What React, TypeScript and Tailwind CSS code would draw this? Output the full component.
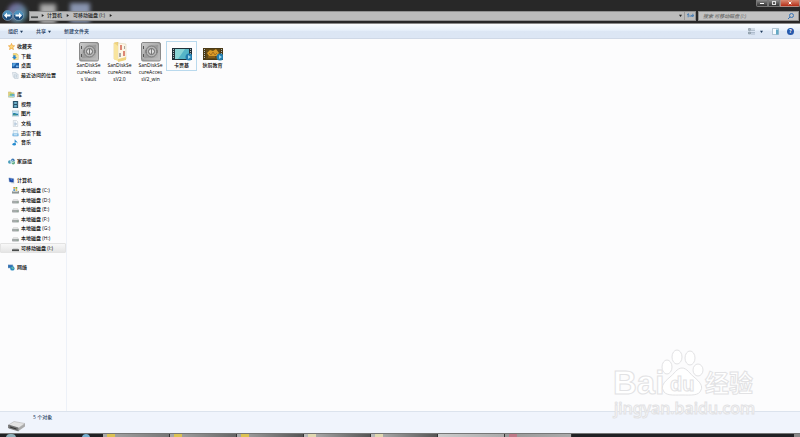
import { ReactNode } from "react";

type IconName =
  | "star" | "download" | "desktop" | "recent" | "library" | "video" | "picture"
  | "document" | "cloud" | "music" | "homegroup" | "computer" | "system"
  | "drive" | "removable" | "network";

const icons: Record<IconName, ReactNode> = {
  star: <path d="M8 1l2 5 5 .5-4 3.500 1.500 5L8 12.500 3.500 15 5 10 1 6.500 6 6z" fill="#ffd77a" stroke="#e99a2c" strokeWidth="1.500" />,
  download: (
    <>
      <path d="M3 1h7l4 3v11H3z" fill="#f2d777" stroke="#d3ad45" />
      <path d="M10 4l4 1v10H8z" fill="#f8e7a0" />
      <path d="M0 9h3V5h5v4h3l-5 6z" fill="#2b86cf" />
    </>
  ),
  desktop: (
    <>
      <path d="M0 2h16v12H0z" fill="#1d5ea8" />
      <path d="M1 3h9L4 10H1z" fill="#5da6df" />
      <path d="M9 8h6v4H9z" fill="#7fb6e4" />
      <path d="M0 13h16v1H0z" fill="#153c70" />
    </>
  ),
  recent: (
    <>
      <path d="M1 1h8l2 3v8H3z" fill="#e8eef4" stroke="#aab8c4" />
      <path d="M6 5h8v10H6z" fill="#f4f7fa" stroke="#9fb0c0" />
      <path d="M8 8h4M8 10h4M8 12h4" stroke="#91a7bc" />
    </>
  ),
  library: (
    <>
      <path d="M1 2h6l1 2h6v10H1z" fill="#e9d780" stroke="#c1ae5b" />
      <path d="M4 6h7v8H4z" fill="#76bd83" />
      <path d="M9 7h6v7H9z" fill="#5da9cf" />
      <path d="M1 11h14v3H1z" fill="#a7d4df" />
    </>
  ),
  video: (
    <>
      <path d="M2 0h12v16H2z" fill="#264e66" />
      <path d="M5 2h6v5H5zM5 9h6v5H5z" fill="#71b4ce" />
      <path d="M3 2v12M13 2v12" stroke="#bdd4dd" strokeDasharray="1 2" />
    </>
  ),
  picture: (
    <>
      <path d="M0 2h16v12H0z" fill="#c8e6f4" stroke="#8ea7b5" />
      <path d="M2 8c4-3 7 2 12 0v4H2z" fill="#267fae" />
      <path d="M2 11l5-2 4 3H2z" fill="#4f9a72" />
    </>
  ),
  document: (
    <>
      <path d="M3 1h7l3 3v11H3z" fill="#fafcfe" stroke="#a9b5bf" />
      <path d="M5 5h4M5 8h6M5 10h6M5 12h4" stroke="#7698bb" />
    </>
  ),
  cloud: (
    <>
      <path d="M3 1h10v13H3z" fill="#deedf8" stroke="#9abbd2" />
      <path d="M1 8h14v6H1z" fill="#79b7e2" />
      <path d="M4 5h8M4 11h8" stroke="#f2fbff" strokeWidth="2" />
    </>
  ),
  music: (
    <>
      <path d="M7 1c1 4 7 4 5 10 0-3-2-4-4-4v6H6V1z" fill="#328dcb" />
      <ellipse cx="5" cy="12" rx="4" ry="3" fill="#248bd0" />
    </>
  ),
  homegroup: (
    <>
      <circle cx="4" cy="9" r="4" fill="#4b9dbb" />
      <circle cx="11" cy="5" r="4" fill="#3975b3" />
      <circle cx="12" cy="11" r="4" fill="#56a87e" />
      <path d="M5 9l6-4 1 6z" fill="none" stroke="#dff1f5" strokeWidth="1.500" />
    </>
  ),
  computer: (
    <>
      <path d="M2 2l11 2v9L3 11z" fill="#1742a5" stroke="#6f94bd" />
      <path d="M4 4l6 1v4z" fill="#4b82d7" />
      <path d="M7 14h8l-3-3z" fill="#a5b5c2" />
    </>
  ),
  system: (
    <>
      <path d="M3 0h4v4H3z" fill="#d89a43" />
      <path d="M8 0h4v4H8z" fill="#6bad51" />
      <path d="M3 5h4v4H3z" fill="#438fce" />
      <path d="M8 5h4v4H8z" fill="#e2bb3c" />
      <path d="M0 9h16v6H0z" fill="#8c9494" />
      <path d="M1 10h13" stroke="#d6dcdc" strokeWidth="2" />
    </>
  ),
  drive: (
    <>
      <path d="M3 6h10l2 4H1z" fill="#eceeee" stroke="#b7bbbb" />
      <path d="M1 10h14v4H1z" fill="#aeb3b3" stroke="#777c7c" />
      <path d="M11 12h2" stroke="#4ba957" />
    </>
  ),
  removable: (
    <>
      <path d="M2 8h12l1 2H1z" fill="#b8bbbb" />
      <path d="M0 10h16v4H0z" fill="#484b4b" />
    </>
  ),
  network: (
    <>
      <path d="M0 2h11v7H0z" fill="#2f70b6" stroke="#7898b8" />
      <circle cx="10" cy="10" r="5" fill="#2689bd" />
      <path d="M7 8l4-2 3 4-4 2z" fill="#68b6a5" />
    </>
  ),
};

function Icon({ name }: { name: IconName }) {
  return <svg viewBox="0 0 16 16" className="size-[7px] shrink-0">{icons[name]}</svg>;
}

type NavItem = { label: string; icon: IconName; root?: boolean; active?: boolean } | null;

// null leaves an empty row between groups
const nav: NavItem[] = [
  { label: "收藏夹", icon: "star", root: true },
  { label: "下载", icon: "download" },
  { label: "桌面", icon: "desktop" },
  { label: "最近访问的位置", icon: "recent" },
  null,
  { label: "库", icon: "library", root: true },
  { label: "视频", icon: "video" },
  { label: "图片", icon: "picture" },
  { label: "文档", icon: "document" },
  { label: "迅雷下载", icon: "cloud" },
  { label: "音乐", icon: "music" },
  null,
  { label: "家庭组", icon: "homegroup", root: true },
  null,
  { label: "计算机", icon: "computer", root: true },
  { label: "本地磁盘 (C:)", icon: "system" },
  { label: "本地磁盘 (D:)", icon: "drive" },
  { label: "本地磁盘 (E:)", icon: "drive" },
  { label: "本地磁盘 (F:)", icon: "drive" },
  { label: "本地磁盘 (G:)", icon: "drive" },
  { label: "本地磁盘 (H:)", icon: "drive" },
  { label: "可移动磁盘 (I:)", icon: "removable", active: true },
  null,
  { label: "网络", icon: "network", root: true },
];

function Sidebar() {
  return (
    <nav className="w-[67px] shrink-0 border-r border-[#edf1f8] pt-[3px]">
      <ul className="grid h-[230px] auto-rows-fr">
        {nav.map((item, i) => (
          <li key={i} className="min-h-0">
            {item && (
              <a
                href="#"
                className={`flex h-full items-center gap-[2px] whitespace-nowrap ${item.root ? "pl-2" : item.active ? "pl-[11px]" : "pl-3"} ${
                  item.active ? "rounded-[1px] border border-[#e3e3e3] bg-linear-to-b from-[#f8f8f8] to-[#e5e5e5]" : ""
                }`}
              >
                <Icon name={item.icon} />
                {item.label}
              </a>
            )}
          </li>
        ))}
      </ul>
    </nav>
  );
}

function SafeIcon() {
  return (
    <svg viewBox="0 0 20 20" className="size-5">
      <defs>
        <linearGradient id="steel" x2="1" y2="1">
          <stop stopColor="#d7d7d7" />
          <stop offset=".5" stopColor="#999" />
          <stop offset="1" stopColor="#c2c2c2" />
        </linearGradient>
      </defs>
      <rect x=".5" y=".5" width="19" height="18.500" rx="1.500" fill="url(#steel)" stroke="#8a8a8a" />
      <rect x="2" y="2" width="16" height="15" rx="1" fill="none" stroke="#bcbcbc" />
      <path d="M2.500 4v3M2.500 12v3" stroke="#555" />
      <circle cx="10.500" cy="9.500" r="5.500" fill="#b5b5b5" stroke="#777" />
      <circle cx="10.500" cy="9.500" r="3" fill="#ddd" stroke="#666" />
      <path d="M10.500 7v5M5 8v3M16 8v3" stroke="#777" />
    </svg>
  );
}

function FolderIcon() {
  return (
    <svg viewBox="0 0 20 20" className="size-5">
      <path d="M4 1l4-1v18l-4-1z" fill="#f0d47d" stroke="#dfbd65" strokeWidth=".5" />
      <path d="M8 1l8 1v15l-8 2z" fill="#fdf6e6" stroke="#d9cda8" strokeWidth=".5" />
      <path d="M10 3h2v5h-2zM13 9h2v5h-2z" fill="#dc8674" />
      <path d="M9 11h2v4H9zM14 4h1v3h-1z" fill="#a9a6a2" />
      <path d="M4 1l4 3v15l-4-2z" fill="#f8e49e" />
      <path d="M8 17l8-2v3l-8 2z" fill="#efd37d" />
    </svg>
  );
}

function FilmIcon({ gold }: { gold?: boolean }) {
  return (
    <svg viewBox="0 0 20 20" className="size-5">
      <path d="M0 6h20v12H0z" fill={gold ? "#4b3a16" : "#203038"} />
      <path d="M3 7h14v10H3z" fill={gold ? "#614916" : "#55b5c7"} />
      {gold ? (
        <>
          <path d="M4 11l3-3 3 1 3-2 3 4-2 3H6z" fill="#d99a27" />
          <path d="M6 11l2 2 2-3 2 3 2-2M5 15h7" fill="none" stroke="#a8701c" />
        </>
      ) : (
        <path d="M3 7h10L6 17H3z" fill="#89d4d5" />
      )}
      <path d="M1.500 7v10M18.500 7v10" stroke="#b4bcbf" strokeWidth="1" strokeDasharray="1 1" />
      <circle cx="17" cy="15" r="3.500" fill="#237eaf" />
      <path d="M16 13v4l3-2z" fill="#9bd6ed" />
    </svg>
  );
}

const files = [
  { lines: ["SanDiskSe", "cureAcces", "s Vault"], icon: <SafeIcon /> },
  { lines: ["SanDiskSe", "cureAcces", "sV2.0"], icon: <FolderIcon /> },
  { lines: ["SanDiskSe", "cureAcces", "sV2_win"], icon: <SafeIcon /> },
  { lines: ["卡贾基"], icon: <FilmIcon />, focused: true },
  { lines: ["狄前教育"], icon: <FilmIcon gold /> },
];

function NavArrow({ back }: { back?: boolean }) {
  return (
    <button aria-label={back ? "后退" : "前进"} className="size-[11px]">
      <svg viewBox="0 0 22 22" className="size-full">
        <circle cx="11" cy="11" r="10" fill="#1b4c7c" stroke="#a7bdcc" />
        <path d="M2 10a9 9 0 0118 0c-5 2-12 2-18 0z" fill="#4f91bd" />
        <path d={back ? "M4 11l6-6v4h7v4h-7v4z" : "M18 11l-6-6v4H5v4h7v4z"} fill="#f5fbff" />
      </svg>
    </button>
  );
}

function TitleBar() {
  return (
    <header className="relative flex h-6 shrink-0 flex-col overflow-hidden border-b border-[#888] bg-[#282828]">
      {/* desktop icons showing through the glass */}
      <div className="absolute top-[3px] left-[7px] h-5 w-5 rounded-full bg-linear-to-br from-[#79639b] to-[#44969b] blur-[2px]" />
      <div className="absolute top-[4px] left-10 h-5 w-4 bg-[#aaa] blur-[2px]" />
      <div className="absolute top-[3px] left-[70px] h-5 w-5 bg-[#8995b0] blur-[2px]" />
      <div className="relative flex h-[10px] items-start justify-end">
        <button aria-label="最小化" className="flex h-[7px] w-3 items-center justify-center rounded-bl-xs border border-t-0 border-[#777] bg-linear-to-b from-[#8d8d8d] to-[#333]">
          <span className="h-px w-1 bg-white" />
        </button>
        <button aria-label="还原" className="flex h-[7px] w-3 items-center justify-center border border-t-0 border-[#777] bg-linear-to-b from-[#8d8d8d] to-[#333]">
          <span className="size-1 border border-[#ddd]" />
        </button>
        <button aria-label="关闭" className="flex h-[7px] w-5 items-center justify-center rounded-br-xs border border-t-0 border-[#b08b82] bg-linear-to-b from-[#d78972] to-[#b42a12]">
          <svg viewBox="0 0 6 6" className="size-1"><path d="M1 1l4 4M5 1L1 5" stroke="#fff" strokeWidth="1.500" /></svg>
        </button>
      </div>
      <div className="relative flex h-[11px] items-center pr-px pl-[2px]">
        <NavArrow back />
        <NavArrow />
        <div className="ml-[5px] flex h-[10px] flex-1 items-center border border-[#909090] bg-[#c3c3c3]/95 pl-[1px] text-[#222]">
          <Icon name="removable" />
          <Caret side className="ml-[3px]" />
          <button className="ml-[3px]">计算机</button>
          <Caret side className="ml-[4px]" />
          <button className="ml-[4px]">可移动磁盘 (I:)</button>
          <Caret side className="ml-[4px]" />
          <button aria-label="历史位置" className="mr-[2px] ml-auto flex"><Caret /></button>
          <button aria-label="刷新" className="flex h-full w-[11px] items-center justify-center border-l border-[#999]">
            <svg viewBox="0 0 12 12" className="size-[7px]" fill="none" stroke="#3977b5" strokeWidth="1.500">
              <path d="M2 9V3M0 5l2-2 2 2M4 7h6V3M7 5l3 3 2-3" />
            </svg>
          </button>
        </div>
        <label className="ml-[2px] flex h-[10px] w-[101px] items-center border border-[#909090] bg-[#c3c3c3] px-1">
          <input
            aria-label="搜索 可移动磁盘 (I:)"
            placeholder="搜索 可移动磁盘 (I:)"
            className="h-full min-w-0 flex-1 italic outline-none placeholder:text-[#666]"
          />
          <svg viewBox="0 0 12 12" className="size-[6px]" fill="none" stroke="#3873b5" strokeWidth="2">
            <circle cx="7" cy="5" r="4" />
            <path d="M4 8l-4 4" />
          </svg>
        </label>
      </div>
    </header>
  );
}

function Caret({ side, className = "" }: { side?: boolean; className?: string }) {
  return (
    <svg viewBox="0 0 4 4" className={`size-[3px] shrink-0 ${className}`}>
      <path d={side ? "M1 0l3 2-3 2z" : "M0 1h4L2 4z"} fill="currentColor" />
    </svg>
  );
}

function Toolbar() {
  return (
    <div className="flex h-[15px] shrink-0 items-center border-b border-[#cfd8e6] bg-linear-to-b from-[#fafdff] from-0% via-[#e8f1fb] via-45% to-[#dce6f4] to-50% pr-[6px] pl-2 text-[#1e395b]">
      <button className="flex items-center gap-[2px]">组织 <Caret /></button>
      <button className="ml-[13px] flex items-center gap-[2px]">共享 <Caret /></button>
      <button className="ml-[13px]">新建文件夹</button>
      <button aria-label="更改视图" className="ml-auto flex items-center gap-[5px]">
        <svg viewBox="0 0 14 14" className="size-[7px]">
          <path d="M1 1h4v4H1zM1 8h4v4H1z" fill="#a7b5c1" stroke="#71808c" />
          <path d="M7 2h2M11 2h2M7 5h2M11 5h2M7 9h2M11 9h2M7 12h2M11 12h2" stroke="#60758b" strokeWidth="1.500" />
        </svg>
        <Caret />
      </button>
      <button aria-label="显示预览窗格" className="ml-[9px]">
        <svg viewBox="0 0 14 14" className="size-[7px]">
          <path d="M1 1h12v12H1z" fill="#f8fcff" stroke="#7596ac" />
          <path d="M8 3h5v10H8z" fill="#62a9c5" />
        </svg>
      </button>
      <button aria-label="帮助" className="ml-2 flex size-[7px] items-center justify-center rounded-full bg-[#2659ac] font-bold text-white">?</button>
    </div>
  );
}

function Watermark() {
  return (
    <svg viewBox="0 0 150 74" className="pointer-events-none absolute right-[40px] bottom-[14px] h-[74px] w-[150px]" fill="#fff" stroke="#e2e2e4">
      <g fontFamily="'Liberation Sans', sans-serif" fontWeight="bold">
        <text x="3" y="45" fontSize="33">Bai</text>
        <path d="M72 19c-5 0-8 6-12 9-6 5-9 9-7 13 2 6 10 5 19 5s17 1 19-5c2-4-1-8-7-13-4-3-7-9-12-9z" />
        <ellipse cx="57" cy="18" rx="5" ry="7" />
        <ellipse cx="67" cy="8" rx="5" ry="7" />
        <ellipse cx="80" cy="9" rx="5" ry="7" />
        <ellipse cx="88" cy="21" rx="5" ry="6" />
        <text x="60" y="42" fontSize="20">du</text>
      </g>
      <text x="95" y="43" fontSize="24" fontWeight="bold" fontFamily="'Noto Sans CJK SC', sans-serif">经验</text>
      <text x="4" y="65" fontSize="16" fontFamily="'Noto Sans', sans-serif">jingyan.baidu.com</text>
    </svg>
  );
}

const tasks = [
  { label: "任务 1", tone: "from-[#aaa] to-[#777]", mark: "bg-[#dbc253]" },
  { label: "任务 2", tone: "from-[#aaa] to-[#666]", mark: "bg-[#dbc253]" },
  { label: "任务 3", tone: "from-[#aaa] to-[#555]", mark: "bg-[#dbc253]" },
  { label: "任务 4", tone: "from-[#bbb] to-[#555]", mark: "bg-[#e0d8b1]" },
  { label: "任务 5", tone: "from-[#bbb] to-[#555]", mark: "bg-[#e0d8b1]" },
  { label: "任务 6", tone: "from-[#ccc] to-[#aaa]", mark: "" },
  { label: "任务 7", tone: "from-[#999] to-[#aaa]", mark: "bg-[#bd7988]" },
];

function Taskbar() {
  return (
    <footer className="flex h-1 shrink-0 overflow-hidden border-t border-[#777] bg-[#202124]">
      <div className="flex w-[103px] shrink-0 gap-[66px] pl-[6px]">
        <span className="h-2 w-[10px] rounded-full bg-[#8eafb9]" />
        <span className="h-2 w-[8px] rounded-full bg-[#75afd0]" />
      </div>
      {tasks.map((task) => (
        <button key={task.label} aria-label={task.label} className={`h-full w-[67px] border-r border-[#333] bg-linear-to-r pl-1 ${task.tone}`}>
          <span className={`block h-full w-2 ${task.mark}`} />
        </button>
      ))}
      <div className="ml-auto w-[6px] bg-[#888]" />
    </footer>
  );
}

export default function App() {
  return (
    <div className="relative flex h-screen flex-col overflow-hidden bg-[#fcfcfd] font-['Open_Sans','Noto_Sans_CJK_SC',sans-serif] text-[5px] leading-[7px] font-medium text-black">
      <TitleBar />
      <Toolbar />
      <div className="flex min-h-0 flex-1">
        <Sidebar />
        <main className="flex flex-1 items-start pt-[2px] pl-[6px]">
          {files.map((file, i) => (
            <button
              key={i}
              className={`flex w-[31px] flex-col items-center border pb-px ${file.focused ? "border-[#b9d9ed]" : "border-transparent"}`}
            >
              {file.icon}
              {file.lines.map((line) => (
                <span key={line} className="whitespace-nowrap">{line}</span>
              ))}
            </button>
          ))}
        </main>
      </div>
      <section className="flex h-[22px] shrink-0 items-start border-t border-[#dce3ed] bg-[#f0f4fc] pl-2 text-[#1e395b]">
        <svg viewBox="0 0 36 24" className="mt-[8px] h-3 w-[18px]">
          <path d="M1 10L12 3l22 4-13 9z" fill="#e3e3e3" stroke="#aaa" />
          <path d="M1 10l20 6v6L1 16z" fill="#777" stroke="#555" />
          <path d="M21 16l13-9v6l-13 9z" fill="#aaa" />
          <path d="M4 13l13 4v2L4 15z" fill="#333" />
        </svg>
        <p className="mt-[2px] ml-[7px]">5 个对象</p>
      </section>
      <Taskbar />
      <Watermark />
    </div>
  );
}
